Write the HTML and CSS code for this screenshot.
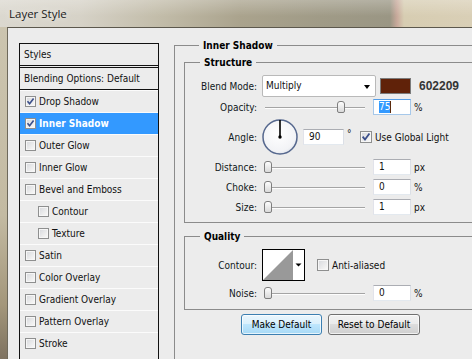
FILE: index.html
```html
<!DOCTYPE html>
<html lang="en">
<head>
<meta charset="UTF-8" />
<meta name="viewport" content="width=device-width, initial-scale=1" />
<title>Layer Style</title>
<link rel="stylesheet" href="styles.css">
</head>
<body>
<div class="window">
  <div class="titlebar">Layer Style</div>

  <div class="client">
    <!-- left list of styles -->
    <ul class="styles">
      <li class="head">Styles</li>
      <li class="blending">Blending Options: Default</li>
      <li><span class="check"><svg viewBox="0 0 9 9"><path d="M1.5 4.2 L3.6 6.8 L7.6 1.4" /></svg></span>Drop Shadow</li>
      <li class="selected"><span class="check"><svg viewBox="0 0 9 9"><path d="M1.5 4.2 L3.6 6.8 L7.6 1.4" /></svg></span>Inner Shadow</li>
      <li><span class="check"></span>Outer Glow</li>
      <li><span class="check"></span>Inner Glow</li>
      <li><span class="check"></span>Bevel and Emboss</li>
      <li class="sub"><span class="check"></span>Contour</li>
      <li class="sub"><span class="check"></span>Texture</li>
      <li><span class="check"></span>Satin</li>
      <li><span class="check"></span>Color Overlay</li>
      <li><span class="check"></span>Gradient Overlay</li>
      <li><span class="check"></span>Pattern Overlay</li>
      <li><span class="check"></span>Stroke</li>
    </ul>

    <!-- right panel -->
    <div class="panel">
      <fieldset class="group">
        <legend>Inner Shadow</legend>

        <fieldset class="box structure">
          <legend>Structure</legend>

          <div class="row row-blend">
            <span class="lbl">Blend Mode:</span>
            <div class="combo">Multiply<span class="arrow"></span></div>
            <span class="swatch"></span>
            <span class="hex">602209</span>
          </div>

          <div class="row row-tight">
            <span class="lbl">Opacity:</span>
            <div class="slider"><span class="thumb" style="left: 74px"></span></div>
            <div class="field focus"><span class="sel">75</span><span class="caret"></span></div>
            <span class="unit">%</span>
          </div>

          <div class="row row-angle">
            <span class="lbl">Angle:</span>
            <svg class="dial" width="36" height="36" viewBox="0 0 36 36">
              <defs>
                <radialGradient id="dialFill" cx="45%" cy="40%" r="65%">
                  <stop offset="0" stop-color="#ffffff" />
                  <stop offset="0.8" stop-color="#f2f3f6" />
                  <stop offset="1" stop-color="#d9dde6" />
                </radialGradient>
              </defs>
              <circle cx="18" cy="18" r="17" fill="url(#dialFill)" stroke="#56688e" stroke-width="1.5" />
              <line x1="18" y1="18" x2="18" y2="1" stroke="#000" stroke-width="1.6" />
              <circle cx="18" cy="18" r="1.7" fill="#000" />
            </svg>
            <div class="field wide">90</div>
            <span class="deg">°</span>
            <span class="check big"><svg viewBox="0 0 9 9"><path d="M1.5 4.2 L3.6 6.8 L7.6 1.4" /></svg></span>
            <span class="after">Use Global Light</span>
          </div>

          <div class="row">
            <span class="lbl">Distance:</span>
            <div class="slider"><span class="thumb" style="left: 1px"></span></div>
            <div class="field">1</div>
            <span class="unit">px</span>
          </div>

          <div class="row">
            <span class="lbl">Choke:</span>
            <div class="slider"><span class="thumb" style="left: 1px"></span></div>
            <div class="field">0</div>
            <span class="unit">%</span>
          </div>

          <div class="row">
            <span class="lbl">Size:</span>
            <div class="slider"><span class="thumb" style="left: 1px"></span></div>
            <div class="field">1</div>
            <span class="unit">px</span>
          </div>
        </fieldset>

        <fieldset class="box quality">
          <legend>Quality</legend>

          <div class="row row-contour">
            <span class="lbl">Contour:</span>
            <svg class="contour" width="43" height="32" viewBox="0 0 43 32">
              <rect x="0.5" y="0.5" width="42" height="31" fill="#fff" stroke="#000" />
              <path d="M1 31 L31 1 L31 31 Z" fill="#999" />
              <path d="M33.5 14.5 H39.5 L36.5 17.5 Z" fill="#000" />
            </svg>
            <span class="check big"></span>
            <span class="after">Anti-aliased</span>
          </div>

          <div class="row">
            <span class="lbl">Noise:</span>
            <div class="slider"><span class="thumb" style="left: 1px"></span></div>
            <div class="field">0</div>
            <span class="unit">%</span>
          </div>
        </fieldset>

        <div class="buttons">
          <button class="btn hot">Make Default</button>
          <button class="btn">Reset to Default</button>
        </div>
      </fieldset>
    </div>
  </div>
</div>
</body>
</html>
```

FILE: styles.css
```css
 html, body {
   margin: 0;
   width: 472px;
   height: 359px;
   overflow: hidden;
 }
 body {
   background: linear-gradient(to bottom, #cdc6b1 0, #c3baa2 60%, #a3967a 85%, #7e7260 100%);
   font-family: "DejaVu Sans Condensed", "DejaVu Sans", sans-serif;
   font-stretch: condensed;
   font-size: 10px;
   color: #111;
 }
 .window {
   display: flex;
   flex-direction: column;
   height: 359px;
 }
 /* aero glass title */
 .titlebar {
   height: 27px;
   flex: none;
   line-height: 28px;
   padding-left: 9px;
   font-family: "Open Sans", sans-serif;
   font-stretch: normal;
   font-size: 11.5px;
   color: #1b1b1b;
   text-shadow: 0 0 6px rgba(255, 255, 255, 0.9);
   background:
     linear-gradient(to bottom, rgba(255, 255, 255, 0.25), rgba(255, 255, 255, 0) 60%),
     linear-gradient(to right, #dbd8cf 0, #d6d2c7 80px, #c2bca9 160px, #aaa38d 240px, #a09b87 320px, #9a9684 390px, #c8a99b 397px, #d7cdb2 404px, #d9cfb6 100%);
 }
 .client {
   flex: 1;
   min-height: 0;
   display: flex;
   align-items: flex-start;
   gap: 15px;
   margin-left: 7px;
   padding: 11px 0 0 11px;
   overflow: hidden;
   background: #ececec;
   border-left: 1px solid #6e695b;
   border-top: 1px solid #5c584d;
 }

 /* styles list */
 .styles {
   list-style: none;
   margin: 4px 0 0 0;
   padding: 0;
   width: 140px;
   height: 316px;
   flex: none;
   box-sizing: border-box;
   border: 1px solid #111;
   border-bottom: 0;
   overflow: hidden;
   background: #ececec;
 }
 .styles li {
   display: flex;
   align-items: center;
   gap: 3px;
   height: 21px;
   padding-left: 5px;
   border-top: 1px solid #fbfbfb;
 }
 .styles li.head {
   padding-left: 4px;
   border-top: 0;
   border-bottom: 3px double #111;
 }
 .styles li.blending {
   padding-left: 4px;
   border-top: 0;
   border-bottom: 1px solid #111;
 }
 .styles li.sub {
   padding-left: 18px;
 }
 .styles li.selected {
   background: #3399ff;
   color: #fff;
   font-weight: bold;
 }

 /* checkboxes */
 .check {
   display: inline-block;
   flex: none;
   width: 11px;
   height: 11px;
   box-sizing: border-box;
   border: 1px solid #8e8f8f;
   background: linear-gradient(135deg, #d6d8dc 0, #f0f0f0 70%, #fafafa 100%);
   box-shadow: inset 0 0 0 1px #f6f6f6;
   position: relative;
 }
 .check.big {
   width: 12px;
   height: 12px;
 }
 .check svg {
   position: absolute;
   left: 0;
   top: 0;
   width: 100%;
   height: 100%;
 }
 .check svg path {
   fill: none;
   stroke: #3b4f8a;
   stroke-width: 1.6;
 }

 /* right side */
 .panel {
   width: 298px;
   flex: none;
 }
 fieldset {
   margin: 0;
   min-width: 0;
   border: 1px solid #8b8b8b;
   border-right: 0;
 }
 legend {
   margin-left: 15px;
   padding: 0 4px;
   font-weight: bold;
   line-height: 13px;
   color: #000;
 }
 .group {
   box-sizing: border-box;
   padding: 4px 0 0 9px;
   height: 320px;
   border-bottom: 0;
 }
 .box {
   padding: 6px 0 7px 0;
 }
 .quality {
   margin-top: 7px;
   padding-bottom: 8px;
 }

 .row {
   display: flex;
   align-items: center;
   height: 16px;
   margin-top: 4px;
 }
 .row-blend {
   height: 22px;
   margin-top: 0;
 }
 .row-tight {
   margin-top: 2px;
 }
 .row-angle {
   height: 36px;
 }
 .row-contour {
   height: 32px;
   margin-top: 0;
 }
 .lbl {
   width: 72px;
   flex: none;
   text-align: right;
   margin-right: 5px;
   color: #101820;
 }

 .combo {
   width: 114px;
   height: 22px;
   box-sizing: border-box;
   border: 1px solid #b9b9b9;
   border-radius: 2px;
   background: #fff;
   line-height: 20px;
   padding-left: 3px;
   position: relative;
 }
 .combo .arrow {
   position: absolute;
   right: 5px;
   top: 9px;
   border-left: 3.5px solid transparent;
   border-right: 3.5px solid transparent;
   border-top: 4px solid #000;
 }
 .swatch {
   width: 31px;
   height: 16px;
   box-sizing: border-box;
   margin-left: 4px;
   border: 1px solid #7b7b7b;
   background: #602209;
 }
 .hex {
   margin-left: 8px;
   font-family: "Liberation Sans", Arial, sans-serif;
   font-stretch: normal;
   font-weight: bold;
   font-size: 12px;
   color: #353535;
 }

 /* sliders */
 .slider {
   width: 102px;
   height: 16px;
   margin-left: 1px;
   flex: none;
   position: relative;
 }
 .slider::before {
   content: '';
   position: absolute;
   left: 2px;
   right: 0;
   top: 8px;
   height: 1px;
   background: #a4a4a4;
   border-bottom: 1px solid #fdfdfd;
 }
 .thumb {
   position: absolute;
   top: 2px;
   width: 8px;
   height: 12px;
   box-sizing: border-box;
   border: 1px solid #7e7e7e;
   border-radius: 3px 3px 2px 2px;
   background: linear-gradient(to bottom, #fdfdfd, #d9d9d9);
 }

 /* text fields */
 .field {
   width: 38px;
   height: 16px;
   box-sizing: border-box;
   margin-left: 8px;
   padding-left: 5px;
   line-height: 14px;
   background: #fff;
   border: 1px solid;
   border-color: #abadb3 #dbdfe6 #e3e9ef #e2e3ea;
   display: flex;
   align-items: center;
 }
 .field.focus {
   border-color: #569de5 #a6c8ea #a6c8ea #a6c8ea;
 }
 .field.wide {
   width: 41px;
   margin-left: 5px;
 }
 .sel {
   background: #3399ff;
   color: #fff;
   line-height: 12px;
 }
 .caret {
   width: 1px;
   height: 12px;
   background: #5a2a0c;
 }
 .unit {
   margin-left: 3px;
 }
 .deg {
   align-self: flex-start;
   margin: 9px 0 0 3px;
   width: 5px;
 }
 .row-angle .check {
   margin-left: 8px;
 }
 .row-contour .check {
   margin-left: 12px;
 }
 .after {
   margin-left: 3px;
 }

 /* buttons */
 .buttons {
   display: flex;
   gap: 6px;
   margin: 4px 0 0 57px;
 }
 .btn {
   height: 21px;
   padding: 0;
   font-family: inherit;
   font-stretch: condensed;
   font-size: 10px;
   color: #000;
   border: 1px solid #707070;
   border-radius: 3px;
   background: linear-gradient(to bottom, #f2f2f2 0, #ebebeb 50%, #dddddd 50%, #cfcfcf 100%);
   box-shadow: inset 0 0 0 1px rgba(255, 255, 255, 0.7);
   width: 92px;
 }
 .btn.hot {
   width: 81px;
   border-color: #3c7fb1;
   background: linear-gradient(to bottom, #eaf6fd 0, #d9f0fc 50%, #bee6fd 50%, #a7d9f5 100%);
 }
```
